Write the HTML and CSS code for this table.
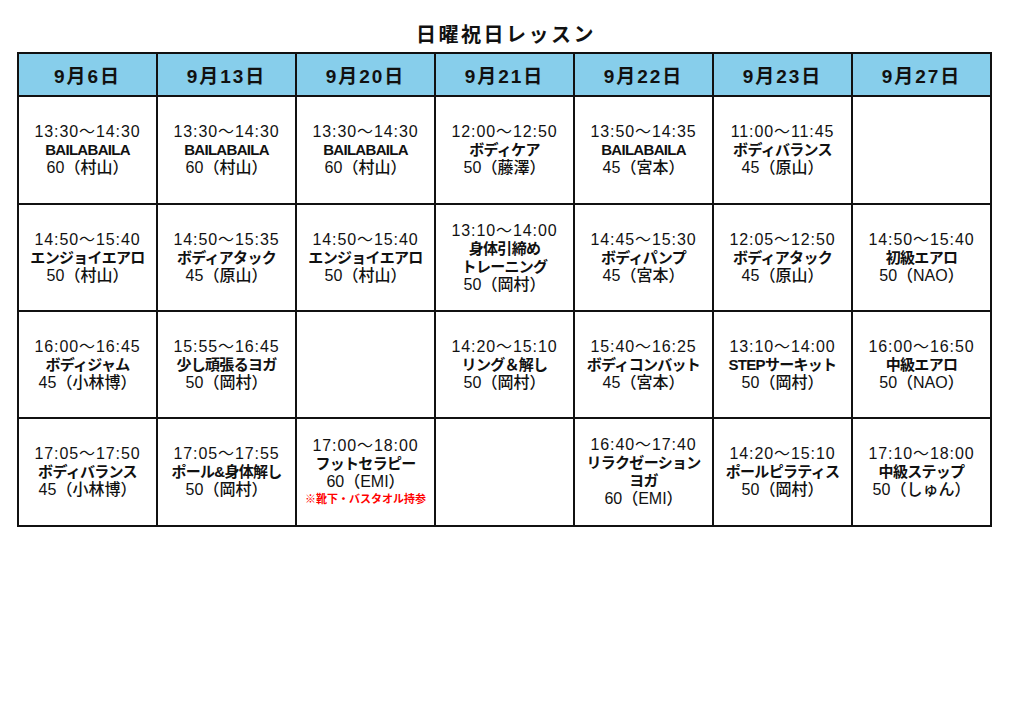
FILE: index.html
```html
<!DOCTYPE html>
<html lang="ja">
<head>
<meta charset="utf-8">
<link rel="stylesheet" href="styles.css">
</head>
<body>
<h1 class="title">日曜祝日レッスン</h1>
<table class="schedule">
  <thead>
    <tr>
      <th>9月6日</th><th>9月13日</th><th>9月20日</th><th>9月21日</th><th>9月22日</th><th>9月23日</th><th>9月27日</th>
    </tr>
  </thead>
  <tbody>
    <tr>
      <td><div class="t">13:30〜14:30</div><div class="n">BAILABAILA</div><div class="i">60（村山）</div></td>
      <td><div class="t">13:30〜14:30</div><div class="n">BAILABAILA</div><div class="i">60（村山）</div></td>
      <td><div class="t">13:30〜14:30</div><div class="n">BAILABAILA</div><div class="i">60（村山）</div></td>
      <td><div class="t">12:00〜12:50</div><div class="n">ボディケア</div><div class="i">50（藤澤）</div></td>
      <td><div class="t">13:50〜14:35</div><div class="n">BAILABAILA</div><div class="i">45（宮本）</div></td>
      <td><div class="t">11:00〜11:45</div><div class="n">ボディバランス</div><div class="i">45（原山）</div></td>
      <td></td>
    </tr>
    <tr>
      <td><div class="t">14:50〜15:40</div><div class="n">エンジョイエアロ</div><div class="i">50（村山）</div></td>
      <td><div class="t">14:50〜15:35</div><div class="n">ボディアタック</div><div class="i">45（原山）</div></td>
      <td><div class="t">14:50〜15:40</div><div class="n">エンジョイエアロ</div><div class="i">50（村山）</div></td>
      <td><div class="t">13:10〜14:00</div><div class="n">身体引締め</div><div class="n">トレーニング</div><div class="i">50（岡村）</div></td>
      <td><div class="t">14:45〜15:30</div><div class="n">ボディパンプ</div><div class="i">45（宮本）</div></td>
      <td><div class="t">12:05〜12:50</div><div class="n">ボディアタック</div><div class="i">45（原山）</div></td>
      <td><div class="t">14:50〜15:40</div><div class="n">初級エアロ</div><div class="i">50（NAO）</div></td>
    </tr>
    <tr>
      <td><div class="t">16:00〜16:45</div><div class="n">ボディジャム</div><div class="i">45（小林博）</div></td>
      <td><div class="t">15:55〜16:45</div><div class="n">少し頑張るヨガ</div><div class="i">50（岡村）</div></td>
      <td></td>
      <td><div class="t">14:20〜15:10</div><div class="n">リング＆解し</div><div class="i">50（岡村）</div></td>
      <td><div class="t">15:40〜16:25</div><div class="n">ボディコンバット</div><div class="i">45（宮本）</div></td>
      <td><div class="t">13:10〜14:00</div><div class="n">STEPサーキット</div><div class="i">50（岡村）</div></td>
      <td><div class="t">16:00〜16:50</div><div class="n">中級エアロ</div><div class="i">50（NAO）</div></td>
    </tr>
    <tr>
      <td><div class="t">17:05〜17:50</div><div class="n">ボディバランス</div><div class="i">45（小林博）</div></td>
      <td><div class="t">17:05〜17:55</div><div class="n">ポール&amp;身体解し</div><div class="i">50（岡村）</div></td>
      <td><div class="t">17:00〜18:00</div><div class="n">フットセラピー</div><div class="i">60（EMI）</div><div class="note">※靴下・バスタオル持参</div></td>
      <td></td>
      <td><div class="t">16:40〜17:40</div><div class="n">リラクゼーション</div><div class="n">ヨガ</div><div class="i">60（EMI）</div></td>
      <td><div class="t">14:20〜15:10</div><div class="n">ポールピラティス</div><div class="i">50（岡村）</div></td>
      <td><div class="t">17:10〜18:00</div><div class="n">中級ステップ</div><div class="i">50（しゅん）</div></td>
    </tr>
  </tbody>
</table>
</body>
</html>
```
FILE: styles.css
```css
html, body {
  margin: 0;
  padding: 0;
  background: #ffffff;
}
body {
  font-family: "Liberation Sans", "Noto Sans CJK JP", sans-serif;
  color: #111;
}
.title {
  margin: 0;
  padding-top: 20px;
  height: 32px;
  line-height: 30px;
  font-size: 20px;
  font-weight: bold;
  letter-spacing: 2.5px;
  text-align: center;
  padding-right: 12px;
}
.schedule {
  margin-left: 17px;
  border-collapse: collapse;
  table-layout: fixed;
  width: 975px;
}
.schedule th,
.schedule td {
  border: 2px solid #111;
  padding: 0;
  text-align: center;
  vertical-align: middle;
}
.schedule th {
  background: #87ceeb;
  height: 41px;
  font-size: 19px;
  font-weight: bold;
  letter-spacing: 2px;
}
.schedule td {
  height: 105px;
  font-size: 16px;
  line-height: 18px;
}
.schedule tbody tr:first-child td,
.schedule tbody tr:last-child td {
  height: 106px;
}
.t {
  letter-spacing: 0.9px;
}
.n {
  font-weight: bold;
  font-size: 15px;
  letter-spacing: -0.7px;
}
.i {
  font-weight: 500;
}
.note {
  color: #ff0000;
  font-size: 11px;
  line-height: 16px;
  font-weight: bold;
}
```
